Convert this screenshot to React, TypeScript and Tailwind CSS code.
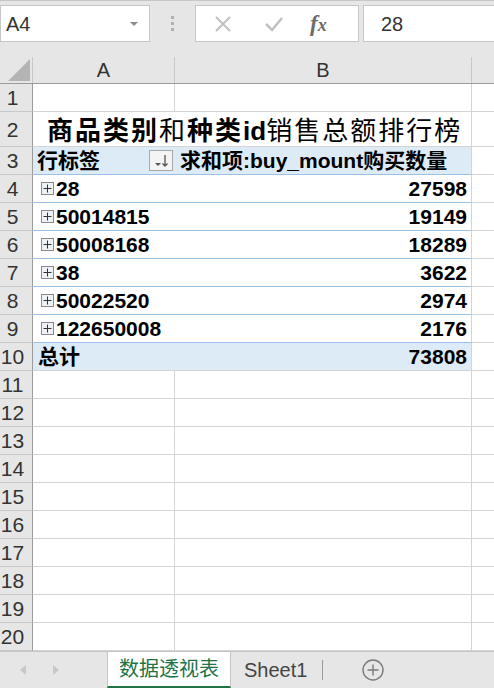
import React from "react";

// pivot table rows: label / total
const rows: [string, string][] = [
  ["28", "27598"],
  ["50014815", "19149"],
  ["50008168", "18289"],
  ["38", "3622"],
  ["50022520", "2974"],
  ["122650008", "2176"],
];

const font = { fontFamily: '"Liberation Sans", "Noto Sans CJK SC", sans-serif' };

const RowHead = ({ n, h = "h-[28px]" }: { n: number; h?: string }) => (
  <div
    className={`${h} w-[33px] shrink-0 bg-[#e6e6e6] border-r border-b border-r-[#9b9b9b] border-b-[#c8c8c8] flex items-center`}
  >
    <span className="w-[25px] text-center text-[21px] leading-none text-[#333]">{n}</span>
  </div>
);

const PlusBox = () => (
  <span className="inline-flex w-[13px] h-[13px] mr-[2px] border border-[#8a8a8a] bg-[#eef2f6] items-center justify-center">
    <svg width="9" height="9" viewBox="0 0 9 9">
      <path d="M4.5 0.5v8M0.5 4.5h8" stroke="#333" strokeWidth="1" />
    </svg>
  </span>
);

const ColC = ({ bottom = true }: { bottom?: boolean }) => (
  <div className={`flex-1 h-full ${bottom ? "border-b border-[#d4d4d4]" : ""}`} />
);

export default function App() {
  return (
    <div className="w-[494px] h-[688px] overflow-hidden bg-white flex flex-col" style={font}>
      {/* formula bar */}
      <div className="h-[57px] bg-[#e6e6e6] border-t border-[#c6c6c6] flex items-start pt-[4px] shrink-0">
        <div className="w-[150px] h-[37px] bg-white border border-[#c6c6c6] flex items-center pl-[5px] pr-[10px]">
          <span className="flex-1 text-[20px] text-[#333]">A4</span>
          <svg width="10" height="6" viewBox="0 0 10 6">
            <path d="M1 1h8L5 5z" fill="#8a8a8a" />
          </svg>
        </div>
        <div className="w-[45px] h-[37px] flex flex-col items-center justify-center gap-[3px]">
          <span className="w-[3px] h-[3px] bg-[#b0b0b0]" />
          <span className="w-[3px] h-[3px] bg-[#b0b0b0]" />
          <span className="w-[3px] h-[3px] bg-[#b0b0b0]" />
        </div>
        <div className="w-[164px] h-[37px] bg-white border border-[#c6c6c6] flex items-center">
          <svg className="ml-[18px]" width="18" height="18" viewBox="0 0 18 18">
            <path d="M2 2l14 14M16 2L2 16" stroke="#c0c0c0" strokeWidth="2" />
          </svg>
          <svg className="ml-[32px]" width="20" height="18" viewBox="0 0 20 18">
            <path d="M2 9l6 6L18 3" stroke="#c0c0c0" strokeWidth="2.5" fill="none" />
          </svg>
          <span
            className="ml-[26px] text-[23px] italic font-bold text-[#6b6b6b] leading-none"
            style={{ fontFamily: '"Liberation Serif", serif' }}
          >
            f<span className="text-[18px]">x</span>
          </span>
        </div>
        <div className="flex-1 ml-[4px] h-[37px] bg-white border border-r-0 border-[#c6c6c6] flex items-center pl-[17px]">
          <span className="text-[20px] text-[#333]">28</span>
        </div>
      </div>

      {/* column headers */}
      <div className="h-[27px] flex bg-[#e6e6e6] border-b border-[#9b9b9b] shrink-0">
        <div className="w-[33px] h-full border-r border-[#c8c8c8] flex items-end justify-end pr-[2px] pb-[2px]">
          <svg width="22" height="22" viewBox="0 0 22 22">
            <path d="M22 0V22H0z" fill="#b4b4b4" />
          </svg>
        </div>
        <div className="w-[142px] h-full border-r border-[#c8c8c8] flex items-center justify-center text-[20px] text-[#333]">
          A
        </div>
        <div className="w-[297px] h-full border-r border-[#c8c8c8] flex items-center justify-center text-[20px] text-[#333]">
          B
        </div>
        <div className="flex-1" />
      </div>

      {/* row 1 */}
      <div className="flex h-[28px] shrink-0">
        <RowHead n={1} />
        <div className="w-[142px] border-r border-b border-[#d4d4d4]" />
        <div className="w-[297px] border-r border-b border-[#d4d4d4]" />
        <ColC />
      </div>

      {/* row 2: title */}
      <div className="flex h-[35px] shrink-0">
        <RowHead n={2} h="h-[35px]" />
        <div className="w-[439px] border-r border-b border-[#d4d4d4] flex items-end pl-[14px] whitespace-nowrap text-black text-[26px] leading-[30px]">
          <span className="font-bold tracking-[2px]">商品类别</span>
          <span className="tracking-[2px]">和</span>
          <span className="font-bold tracking-[2px]">种类</span>
          <span className="font-bold">id</span>
          <span className="tracking-[2px]">销售总额排行榜</span>
        </div>
        <ColC />
      </div>

      {/* row 3: pivot header */}
      <div className="flex h-[28px] shrink-0">
        <RowHead n={3} />
        <div className="w-[142px] bg-[#ddebf7] border-b border-[#9bc2e6] flex items-center pl-[4px] pr-[2px]">
          <span className="flex-1 text-[21px] font-bold text-black">行标签</span>
          <span className="w-[24px] h-[21px] bg-[#f4f4f4] border border-[#a8a8a8] flex items-center justify-center">
            <svg width="16" height="14" viewBox="0 0 16 14">
              <path d="M2 9h6L5 12z" fill="#555" />
              <path d="M12 1v11M9.5 9.5L12 12l2.5-2.5" stroke="#555" strokeWidth="1.3" fill="none" />
            </svg>
          </span>
        </div>
        <div className="w-[297px] bg-[#ddebf7] border-r border-b border-r-[#d4d4d4] border-b-[#9bc2e6] flex items-center pl-[5px]">
          <span className="text-[21px] font-bold text-black whitespace-nowrap">求和项:buy_mount购买数量</span>
        </div>
        <ColC />
      </div>

      {/* rows 4-9 */}
      {rows.map(([label, total], i) => (
        <div key={label} className="flex h-[28px] shrink-0">
          <RowHead n={i + 4} />
          <div className="w-[142px] border-b border-[#9bc2e6] flex items-center pl-[8px]">
            <PlusBox />
            <span className="text-[21px] font-bold text-black">{label}</span>
          </div>
          <div className="w-[297px] border-r border-b border-r-[#d4d4d4] border-b-[#9bc2e6] flex items-center justify-end pr-[4px]">
            <span className="text-[21px] font-bold text-black">{total}</span>
          </div>
          <ColC />
        </div>
      ))}

      {/* row 10: grand total */}
      <div className="flex h-[28px] shrink-0">
        <RowHead n={10} />
        <div className="w-[142px] bg-[#ddebf7] border-b border-[#d4d4d4] flex items-center pl-[5px]">
          <span className="text-[21px] font-bold text-black">总计</span>
        </div>
        <div className="w-[297px] bg-[#ddebf7] border-r border-b border-[#d4d4d4] flex items-center justify-end pr-[4px]">
          <span className="text-[21px] font-bold text-black">73808</span>
        </div>
        <ColC />
      </div>

      {/* empty rows 11-20 */}
      {Array.from({ length: 10 }, (_, i) => (
        <div key={i} className="flex h-[28px] shrink-0">
          <RowHead n={i + 11} />
          <div className="w-[142px] border-r border-b border-[#d4d4d4]" />
          <div className="w-[297px] border-r border-b border-[#d4d4d4]" />
          <ColC />
        </div>
      ))}

      {/* sheet tabs */}
      <div className="flex-1 flex items-stretch bg-[#e6e6e6] border-t border-[#c6c6c6]">
        <div className="w-[107px] flex items-center pl-[19px] gap-[25px]">
          <svg width="8" height="12" viewBox="0 0 8 12">
            <path d="M7 1L1 6l6 5z" fill="#c8c8c8" />
          </svg>
          <svg width="8" height="12" viewBox="0 0 8 12">
            <path d="M1 1l6 5-6 5z" fill="#c8c8c8" />
          </svg>
        </div>
        <div className="w-[124px] bg-white border-b-2 border-[#217346] border-x border-x-[#c6c6c6] flex items-center justify-center">
          <span className="text-[20px] text-[#217346]">数据透视表</span>
        </div>
        <div className="w-[91px] flex items-center pl-[13px]">
          <span className="text-[20px] text-[#444]">Sheet1</span>
        </div>
        <div className="w-px my-[8px] bg-[#9a9a9a]" />
        <div className="flex items-center pl-[39px]">
          <svg width="22" height="22" viewBox="0 0 22 22">
            <circle cx="11" cy="11" r="10" stroke="#7a7a7a" strokeWidth="1.4" fill="none" />
            <path d="M11 5.5v11M5.5 11h11" stroke="#7a7a7a" strokeWidth="1.4" />
          </svg>
        </div>
      </div>
    </div>
  );
}
